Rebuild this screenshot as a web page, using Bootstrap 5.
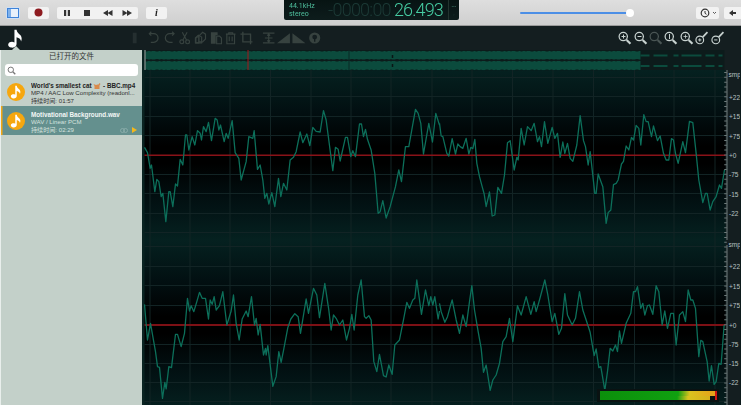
<!DOCTYPE html>
<html lang="zh"><head><meta charset="utf-8"><title>Audio editor</title>
<link href="https://cdn.jsdelivr.net/npm/bootstrap@5.3.0/dist/css/bootstrap.min.css" rel="stylesheet">
<style>
html,body{height:405px;overflow:hidden;background:#0c1a1b}
body{font-family:"Liberation Sans","Noto Sans CJK SC",sans-serif;}
.app-shell{width:741px;height:405px;filter:blur(.3px)}
.top-bar{height:26px;background:linear-gradient(#dedede,#cfcfcf);border-bottom:1px solid #9a9a9a;padding-left:6px}
.tb-btn{height:12px;min-width:21px;padding:0;border:0;border-radius:2px;background:#f2f2f2;color:#333;display:flex;align-items:center;justify-content:center;--bs-btn-hover-bg:#f2f2f2}
.tb-btn svg{display:block}
.tb-group{height:12px}
.tb-group .tb-btn{border-right:1px solid #dcdcdc;border-radius:0}
.tb-group .tb-btn:first-child{border-radius:2px 0 0 2px}
.tb-group .tb-btn:last-child{border-radius:0 2px 2px 0;border-right:0}
.info-i{font:italic bold 10px "Liberation Serif",serif;color:#222}
.side-toggle{min-width:14px;background:#cfe0f5}
.lcd{width:176px;height:20px;margin-left:117px;background:linear-gradient(#071413,#0d1c1c);border-radius:0 0 2px 2px;color:#46cca2;align-self:flex-start;padding-left:5px}
.lcd-info{font:7px/8px Roboto,sans-serif;color:#4fbf9d;width:38px;flex:none}
.lcd-dim{font:300 18px/20px Roboto,sans-serif;color:#1c3a36;width:65px;flex:none;white-space:nowrap;letter-spacing:-.75px;margin-left:1px}
.lcd-main{font:300 18px/20px Roboto,sans-serif;width:52px;flex:none;white-space:nowrap;margin-left:1px;letter-spacing:-.9px}
.lcd-side{width:11px;height:20px;border-left:1px solid #22332f;margin-left:2px;color:#2f5a4f;font-size:4px;line-height:8px;text-align:center;padding-top:3px;flex:none}
.vol{width:110px;height:2px;margin-left:61px;background:#4c8fe6;border-radius:1px}
.vol-thumb{width:8px;height:8px;border-radius:50%;background:#fff;right:-4px;top:-3px}
.hist-btn{min-width:23px;margin-left:66px}
.back-btn{min-width:17px;margin-left:5px;border-radius:2px 0 0 2px;margin-right:0}
.dark-bar{height:24px;background:#141e20;color:#37423f;flex:none}
.note-logo{margin-left:7px;width:17px;flex:none}
.notch{left:12px;bottom:0;width:0;height:0;border:4px solid transparent;border-bottom-color:#c3d0c9;border-top:0}
.tool-ico{width:15.4px;height:16px;display:block;flex:none}
.zoom-set{color:#c8d2d0;margin-right:16px}
.zoom-set .is-off{color:#4a5554}
.side-pane{width:142px;height:355px;background:#c3d0c9;border-left:1px solid #e9efec;flex:none;color:#222}
.side-title{font-size:7.5px;line-height:14px;height:14px;text-align:center;color:#333}
.side-search{height:12px;margin:0 4px 1px 4px;background:#fff;border-radius:3px;padding-left:2px}
.file-row{height:29px;padding:4.500px 4px 0 6px;font-size:6.100px;line-height:7.700px;color:#333}
.file-row.is-on{background:#64908e;color:#d5e2df;box-shadow:inset 1.5px 0 0 #f3a712}
.file-row b{color:#222;font-size:6.300px}
.file-row.is-on b{color:#f3f7f6}
.disc{width:18px;height:18px;border-radius:50%;background:#f6a70f;flex:none;margin-top:1.500px}
.file-lines{margin-left:6px;white-space:nowrap;overflow:hidden;width:108px}
.row-mark{right:5px;bottom:2px}
.plot{width:598px;height:355px;display:block;flex:none}
.plot text{font:6.500px "Liberation Sans",sans-serif;fill:#b8c2c2}
.level{bottom:3px;width:122px;height:13px;background:#0a1212;padding:2px 3px}
.lv-bar{height:4.5px}
.lv-top{background:linear-gradient(90deg,#0b8f0b,#10a010 68%,#d9c31f 78%,#e5a51a 97%);width:115px}
.lv-bot{background:linear-gradient(90deg,#0b8f0b,#10a010 70%,#d9c31f 80%,#d6b01c);width:110px}
.lv-red{left:118px;top:2px;width:2px;height:9px;background:#d01515}
</style></head><body>
<svg width="0" height="0" class="position-absolute"><defs>
<symbol id="note" viewBox="0 0 16 18"><path fill="currentColor" d="M7 .8h2c.3 2.500 2 3.500 3.500 5 1.500 1.600 1.700 3.800.8 6-.3-2-1.500-3.300-4.300-4v6.500c0 2.400-2.500 3.800-5 3.300-2.300-.4-3.300-2-2.800-3.500.6-1.700 3.300-2.600 5.800-1.400z"/></symbol>
<symbol id="mag" viewBox="0 0 16 16"><circle cx="6.500" cy="6.500" r="4.300" fill="none" stroke="currentColor" stroke-width="1.300"/><path d="M10 10l4 4" stroke="currentColor" stroke-width="2.200"/></symbol>
</defs></svg>
<div class="app-shell d-flex flex-column position-relative">
 <div class="top-bar d-flex align-items-center flex-none">
  <button class="btn tb-btn side-toggle"><svg width="12" height="10"><rect x=".5" y=".5" width="11" height="9" fill="#e9f1fb" stroke="#3f83d8"/><rect x="1" y="1" width="3" height="8" fill="#7fb0ea"/></svg></button>
  <button class="btn tb-btn ms-2"><svg width="9" height="9"><circle cx="4.500" cy="4.500" r="4" fill="#8e1b20"/></svg></button>
  <div class="btn-group tb-group ms-2">
   <button class="btn tb-btn"><svg width="8" height="8"><path d="M1 1h2.200v6H1zM4.800 1H7v6H4.800z" fill="#333"/></svg></button>
   <button class="btn tb-btn"><svg width="8" height="8"><rect x="1" y="1" width="6" height="6" fill="#333"/></svg></button>
   <button class="btn tb-btn"><svg width="11" height="8"><path d="M6 1v6L1 4zM10.500 1v6L5.500 4z" fill="#333"/></svg></button>
   <button class="btn tb-btn"><svg width="11" height="8"><path d="M.5 1v6l5-3zM5 1v6l5-3z" fill="#333"/></svg></button>
  </div>
  <button class="btn tb-btn ms-2 info-i">i</button>
  <div class="lcd d-flex align-items-center">
   <div class="lcd-info">44.1kHz<br>stereo</div>
   <div class="lcd-dim">-0000:00</div>
   <div class="lcd-main">26.493</div>
   <div class="lcd-side">▪▪▪<br>◦</div>
  </div>
  <div class="vol position-relative"><div class="vol-thumb position-absolute"></div></div>
  <button class="btn tb-btn hist-btn"><svg width="18" height="10" fill="none" stroke="#333"><circle cx="6" cy="5" r="3.800" stroke-width="1.200"/><path d="M6 3v2.300l1.500 1"/><path d="M14 4l1.500 1.500L17 4" stroke-width=".8"/></svg></button>
  <button class="btn tb-btn back-btn"><svg width="9" height="8"><path d="M1 4l4-3v2h3v2H5v2z" fill="#333"/></svg></button>
 </div>
 <div class="dark-bar d-flex align-items-center position-relative">
  <svg class="note-logo text-white" width="17" height="19"><use href="#note"/></svg>
  <span class="notch position-absolute"></span>
  <svg class="tool-ico" style="margin-left:103px" viewBox="0 0 16 16"><path d="M6 2.500h4v11H6z" fill="#252f30"/></svg>
  <svg class="tool-ico ms-1" viewBox="0 0 16 16" fill="none" stroke="currentColor" stroke-width="1.300"><path d="M3.500 3.500h4.500a4.500 4.500 0 0 1 0 9H5"/><path d="M5.500 1.500l-2 2 2 2"/></svg>
  <svg class="tool-ico" viewBox="0 0 16 16" fill="none" stroke="currentColor" stroke-width="1.300"><path d="M12.500 3.500H8a4.500 4.500 0 0 0 0 9h3"/><path d="M10.500 1.500l2 2-2 2"/></svg>
  <svg class="tool-ico" viewBox="0 0 16 16" fill="none" stroke="currentColor" stroke-width="1.200"><circle cx="5" cy="12" r="2"/><circle cx="11" cy="12" r="2"/><path d="M6 10.300L10.500 2M10 10.300L5.500 2"/></svg>
  <svg class="tool-ico" viewBox="0 0 16 16" fill="none" stroke="currentColor" stroke-width="1.200"><path d="M6 6l4-4 3 2v5l-3 3H6z"/><path d="M3 8l3-2v7H3z" fill="#141e20"/><path d="M2.500 8l3-3 3.500 2v6H2.500z"/></svg>
  <svg class="tool-ico" viewBox="0 0 16 16"><path d="M3 2h7v3H8v9H3z" fill="currentColor"/><path d="M9 6h3l2 2v6H9z" fill="none" stroke="currentColor" stroke-width="1.200"/></svg>
  <svg class="tool-ico" viewBox="0 0 16 16" fill="none" stroke="currentColor" stroke-width="1.200"><path d="M3 4h10M6 4V2.500h4V4M4 4.500v9.500h8V4.500M6.500 6.500v5M9.500 6.500v5"/></svg>
  <svg class="tool-ico" viewBox="0 0 16 16" fill="none" stroke="currentColor" stroke-width="1.400"><path d="M4 1.500V12h10M1.500 4H12v10.500"/></svg>
  <svg class="tool-ico" style="margin-left:6.500px" viewBox="0 0 16 16" fill="none" stroke="currentColor" stroke-width="1.200"><path d="M2 3h12M2 13h12M8 4v8M6.500 5.500L8 4l1.500 1.500M6.500 10.500L8 12l1.500-1.500M4 8h8"/></svg>
  <svg class="tool-ico" viewBox="0 0 16 16"><path d="M1 13.500L14.500 3v10.500z" fill="currentColor"/></svg>
  <svg class="tool-ico" viewBox="0 0 16 16"><path d="M15 13.500L1.500 3v10.500z" fill="currentColor"/></svg>
  <svg class="tool-ico" viewBox="0 0 16 16"><circle cx="8" cy="8" r="5.800" fill="currentColor"/><circle cx="8" cy="7" r="2.500" fill="#141e20"/><path d="M8 8v4" stroke="#141e20" stroke-width="1.400"/></svg>
  <div class="d-flex ms-auto zoom-set">
   <svg class="tool-ico"><use href="#mag"/><path d="M4.500 6.500h4M6.500 4.500v4" stroke="currentColor"/></svg>
   <svg class="tool-ico"><use href="#mag"/><path d="M4.500 6.500h4" stroke="currentColor"/></svg>
   <svg class="tool-ico is-off"><use href="#mag"/></svg>
   <svg class="tool-ico"><use href="#mag"/><path d="M6.500 4v5" stroke="currentColor"/></svg>
   <svg class="tool-ico"><use href="#mag"/><path d="M4.500 6.500h4M6.500 4.500v4" stroke="currentColor" stroke-width=".8"/></svg>
   <svg class="tool-ico" viewBox="0 0 16 16" fill="none" stroke="currentColor"><circle cx="6" cy="10" r="4" stroke-width="1.200"/><path d="M9 7l5-5" stroke-width="1.800"/><path d="M4.300 10h3.400M6 8.300v3.400"/></svg>
   <svg class="tool-ico" viewBox="0 0 16 16" fill="none" stroke="currentColor"><circle cx="6" cy="10" r="4" stroke-width="1.200"/><path d="M9 7l5-5" stroke-width="1.800"/><path d="M4.300 10h3.400"/></svg>
  </div>
 </div>
 <div class="d-flex position-relative">
  <aside class="side-pane">
   <div class="side-title">已打开的文件</div>
   <div class="side-search d-flex align-items-center"><svg width="9" height="9" fill="none" stroke="#777"><circle cx="3.800" cy="3.800" r="2.700"/><path d="M5.800 5.800L8.300 8.300" stroke-width="1.300"/></svg></div>
   <div class="file-row d-flex position-relative">
    <div class="disc d-flex align-items-center justify-content-center text-white"><svg width="12" height="14"><use href="#note"/></svg></div>
    <div class="file-lines"><b>World's smallest cat <svg width="8" height="7"><path d="M.5 2l1 2v3h5V3.500l1-1.500-1-1-1 1.500h-1L3 3z" fill="#d98a4b"/></svg> - BBC.mp4</b><br>MP4 / AAC Low Complexity (readonl...<br>持续时间: 01:57</div>
   </div>
   <div class="file-row is-on d-flex position-relative">
    <div class="disc d-flex align-items-center justify-content-center text-white"><svg width="12" height="14"><use href="#note"/></svg></div>
    <div class="file-lines"><b>Motivational Background.wav</b><br>WAV / Linear PCM<br>持续时间: 02:29</div>
    <div class="row-mark position-absolute d-flex align-items-center gap-1"><svg width="8" height="5" fill="none" stroke="#8fb0ad" stroke-width=".8"><rect x=".5" y=".5" width="4" height="4" rx="2"/><rect x="3.500" y=".5" width="4" height="4" rx="2"/></svg><svg width="5" height="6"><path d="M0 0l5 3-5 3z" fill="#f3b81c"/></svg></div>
   </div>
  </aside>
  <svg class="plot" viewBox="142.500 50 598 355">
   <defs>
    <linearGradient id="chan" x1="0" y1="0" x2="0" y2="1"><stop offset="0" stop-color="#052120"/><stop offset=".25" stop-color="#020f11"/><stop offset=".45" stop-color="#000"/><stop offset=".55" stop-color="#000"/><stop offset=".75" stop-color="#020f11"/><stop offset="1" stop-color="#052120"/></linearGradient>
   </defs>
   <rect x="142" y="50" width="600" height="355" fill="#141e20"/>
   <rect x="142" y="70" width="584" height="170" fill="url(#chan)"/>
   <rect x="142" y="240" width="584" height="170" fill="url(#chan)"/>
   <rect x="142" y="50" width="3" height="355" fill="#0a2422"/>
   <!-- overview -->
   <rect x="145" y="50" width="580" height="20" fill="#0c1b1b"/>
   <rect x="146" y="51" width="495" height="8.500" fill="#0b4b3d"/>
   <rect x="146" y="61" width="495" height="9" fill="#0b4b3d"/>
   <path d="M146 51H641M146 59.500H641M146 61H641M146 70H641" stroke="#0c1b1b" stroke-dasharray="2 3 1 4 3 2" fill="none"/>
   <path d="M349.500 50v20" stroke="#0a2a26" stroke-width="1"/>
   <path d="M393 55v3M393 64v3" stroke="#0a1414" stroke-width="1.500"/>
   <path d="M641 55.500H723M641 66H723" stroke="#0b4b3d" stroke-width="1.800" stroke-dasharray="9 4 14 6 5 3 20 4" fill="none"/>
   <path d="M145.500 50v20" stroke="#9fb0ab" stroke-width="1"/>
   <path d="M248.500 50v20" stroke="#a5181c" stroke-width="1"/>
   <!-- grid -->
   <g stroke="#122425" stroke-width="1" fill="none">
    <path d="M150.500 70V405M190.500 70V405M230.500 70V405M271 70V405M311.500 70V405M351.500 70V405M391.500 70V405M432.500 70V405M472.500 70V405M513 70V405M553.500 70V405M594 70V405M635 70V405M674.500 70V405M715.500 70V405"/>
    <path d="M145 77.500H726M145 96.500H726M145 116.500H726M145 135.500H726M145 174.500H726M145 193.500H726M145 213.500H726M145 232.500H726M145 246.500H726M145 266.500H726M145 285.500H726M145 305.500H726M145 344.500H726M145 363.500H726M145 382.500H726M145 401.500H726"/>
   </g>
   <rect x="145" y="154.500" width="581" height="1.500" fill="#8a1218"/>
   <rect x="145" y="324" width="581" height="2" fill="#7d1015"/>
   <!-- waves -->
   <g fill="none" stroke="#0c6f5a" stroke-width="1.300" stroke-linejoin="round">
    <polyline transform="translate(140 90) scale(.3333)" vector-effect="non-scaling-stroke" points="15,172 24,188 32,235 36,225 46,305 52,268 58,275 65,320 70,310 79,395 88,305 92,305 100,350 108,282 114,288 122,208 130,225 138,135 142,135 148,180 158,140 166,165 174,122 182,130 186,150 192,110 200,125 207,97 216,152 227,85 233,90 238,120 243,105 254,155 260,130 266,145 278,92 287,188 298,205 305,270 320,215 328,140 340,145 344,122 354,238 362,225 370,270 376,325 382,310 388,342 397,308 406,350 417,265 424,320 432,280 442,300 452,210 462,202 470,185 482,126 490,158 502,132 511,167 520,112 530,124 542,126 552,62 560,90 580,242 588,172 596,178 602,213 618,142 624,142 634,200 640,182 648,200 660,102 666,102 672,140 678,118 684,148 695,180 706,250 716,370 722,365 730,332 740,384 752,350 768,290 778,240 786,275 798,170 808,170 828,58 836,70 844,100 852,192 868,100 879,156 889,70 900,105"/>
    <polyline transform="translate(440 90) scale(.3333)" vector-effect="non-scaling-stroke" points="0,100 5,138 10,140 22,190 28,198 38,146 48,192 55,162 62,170 70,175 80,145 88,192 94,172 100,176 106,148 112,220 120,260 128,290 134,312 140,350 150,306 158,378 166,375 175,292 186,310 195,255 204,158 212,152 224,240 232,202 236,210 245,115 254,165 264,110 275,122 284,100 294,155 300,140 306,170 315,95 325,160 338,112 346,145 354,130 362,202 370,156 376,190 384,160 392,205 400,214 412,165 422,77 432,152 438,170 446,225 452,185 466,310 470,310 476,252 490,290 500,400 506,368 514,360 522,284 530,280 536,270 546,222 552,214 560,168 568,180 576,142 582,150 590,106 598,115 604,165 613,74 620,95 626,95 636,140 642,108 654,152 662,138 672,190 680,210 688,210 696,146 702,150 708,190 716,220 730,155 738,188 750,94 760,98 770,190 778,270 790,338 798,310 803,310 812,360 820,335 830,320 840,285 846,295 855,240"/>
    <polyline transform="translate(140 245) scale(.3333)" vector-effect="non-scaling-stroke" points="15,178 24,285 33,235 48,320 54,365 60,367 69,460 76,412 80,432 88,365 96,368 108,268 114,268 125,305 135,265 144,160 150,198 155,182 163,200 172,170 180,142 188,160 198,160 207,222 212,165 218,178 224,155 230,195 240,182 250,140 262,240 275,198 282,150 290,235 299,285 308,222 320,198 326,215 336,155 345,240 350,220 356,270 362,238 372,330 378,310 380,330 385,302 400,424 410,395 418,320 425,352 433,312 445,248 454,222 466,206 476,215 483,265 500,162 507,205 522,130 532,150 540,218 556,115 568,195 575,255 582,210 590,220 600,240 610,225 621,285 630,250 637,208 644,255 655,150 665,105 675,215 680,220 688,212 695,225 703,350 712,380 720,328 732,392 740,396 748,360 758,388 766,300 780,285 792,225 802,172 810,190 820,165 826,160 832,105 846,208 858,135 868,182 874,155 880,180 886,155 896,222 900,198"/>
    <polyline transform="translate(440 245) scale(.3333)" vector-effect="non-scaling-stroke" points="0,175 5,200 16,232 24,215 32,185 38,165 50,225 60,265 70,210 80,245 90,170 97,122 105,195 116,260 125,310 132,382 140,360 152,436 160,405 170,390 180,355 190,290 200,275 210,220 220,290 234,182 245,210 260,155 274,208 284,170 290,200 300,165 316,105 325,150 338,230 346,205 358,268 366,250 376,146 384,210 398,240 408,220 420,140 430,195 440,225 452,262 464,332 470,312 478,368 484,365 496,436 504,380 512,310 520,318 528,300 534,320 540,258 546,295 560,235 574,205 582,140 588,140 594,125 604,190 610,175 616,210 624,182 630,180 640,208 650,122 658,140 668,240 676,198 684,250 694,205 702,205 710,300 720,210 730,200 738,230 746,135 754,165 760,165 768,190 778,335 784,286 790,290 803,350 809,408 816,362 824,418 830,410 838,355 845,358 854,240"/>
   </g>
   <!-- ruler -->
   <path d="M727.500 70V240M727.500 245V405" stroke="#6f7c7c" stroke-width="1"/>
   <path d="M726 72V405" stroke="#6f7c7c" stroke-width="2.500" stroke-dasharray="1 3.850" fill="none"/>
   <g>
    <text x="729" y="77">smp</text><text x="729.500" y="99.500">+22</text><text x="729.500" y="119">+15</text><text x="729.500" y="138.500">+75</text><text x="729.500" y="158">+0</text><text x="729.500" y="177">-75</text><text x="729.500" y="196.500">-15</text><text x="729.500" y="216">-22</text>
    <text x="729" y="247">smp</text><text x="729.500" y="269">+22</text><text x="729.500" y="288.500">+15</text><text x="729.500" y="308">+75</text><text x="729.500" y="327.500">+0</text><text x="729.500" y="346.500">-75</text><text x="729.500" y="366">-15</text><text x="729.500" y="385">-22</text>
   </g>
  </svg>
  <div class="level position-absolute" style="left:597px">
   <div class="lv-bar lv-top"></div><div class="lv-bar lv-bot"></div>
   <div class="lv-red position-absolute"></div>
  </div>
 </div>
</div>
</body></html>
